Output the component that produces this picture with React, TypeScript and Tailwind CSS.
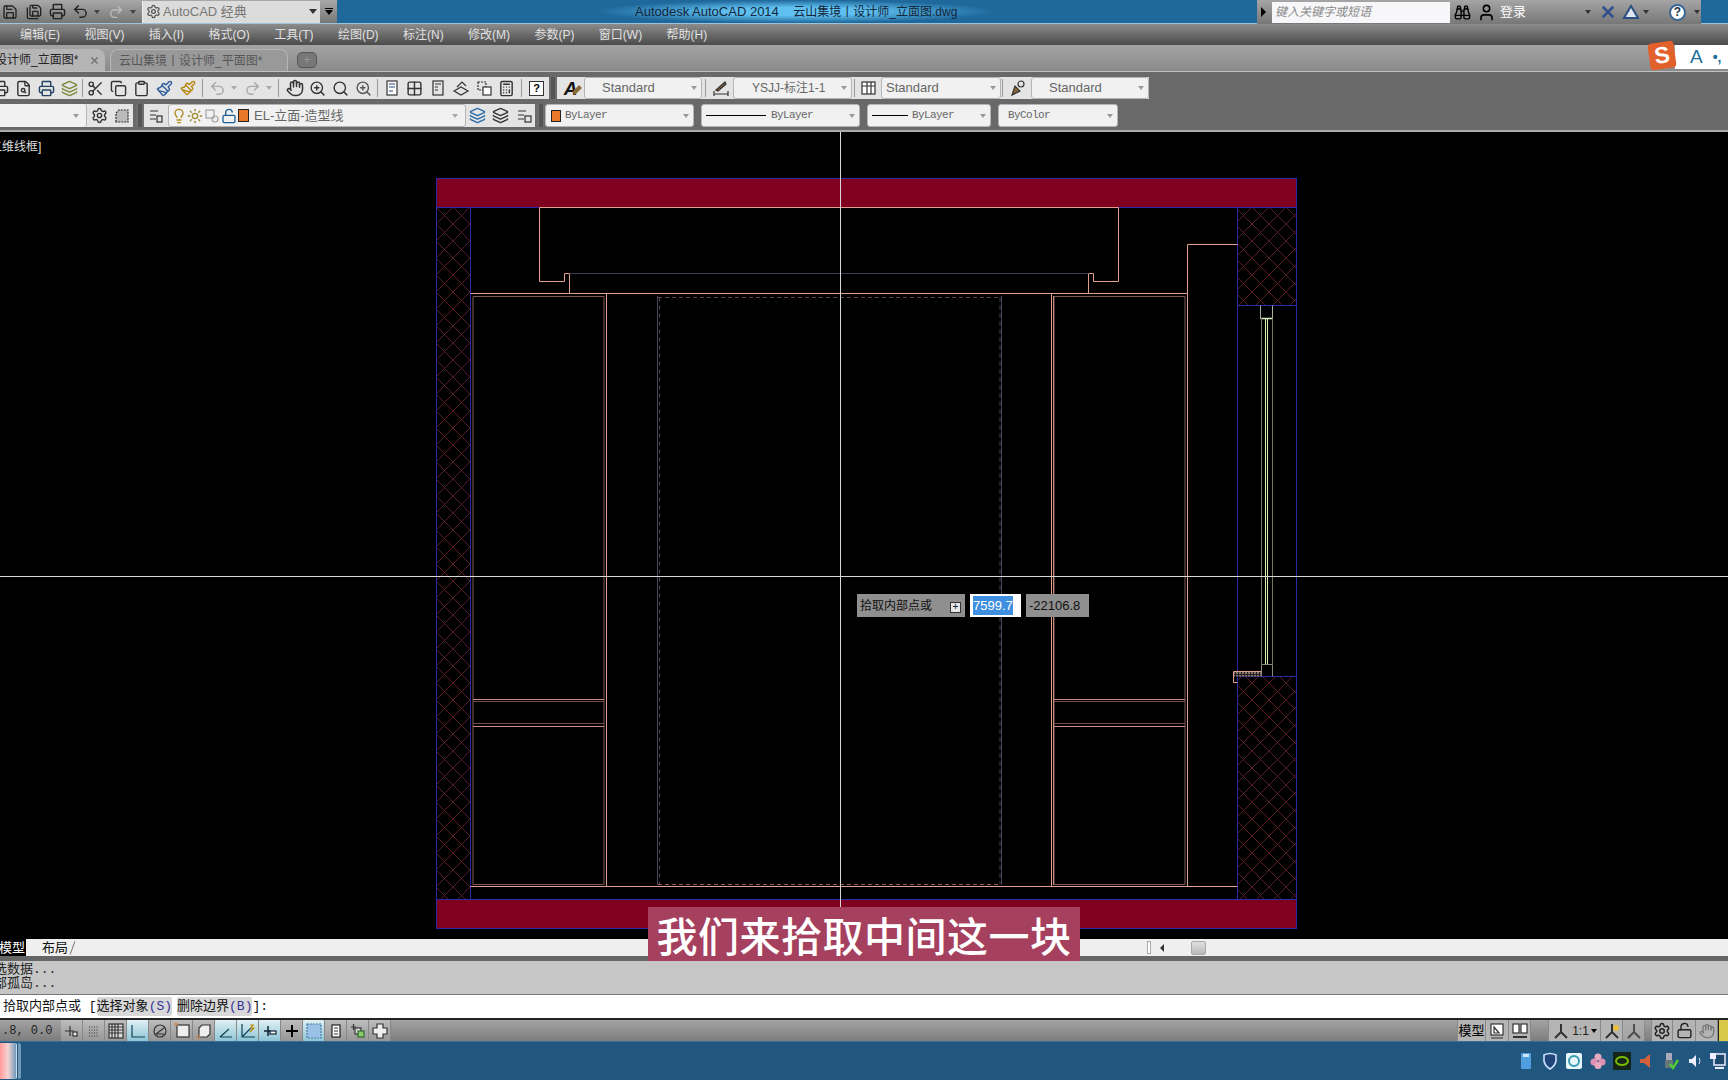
import React from 'react'
import {
  Binoculars, Calculator, Clipboard, Copy, FileSearch, Grid2x2, Hand, Layers, Lightbulb, LockOpen,
  Paintbrush, Printer, Redo2, Save, SaveAll, Scissors, Search, Settings, Sun, Undo2, User, X, ZoomIn,
} from 'lucide-react'

const cjk = "font-['Liberation_Sans','Noto_Sans_CJK_SC',sans-serif]"
const mono = "font-['Liberation_Mono','Noto_Sans_CJK_SC',monospace]"

const menus = ['编辑(E)', '视图(V)', '插入(I)', '格式(O)', '工具(T)', '绘图(D)', '标注(N)', '修改(M)', '参数(P)', '窗口(W)', '帮助(H)']

const Caret = ({ className = 'border-t-[#777]' }: { className?: string }) => (
  <span className={`inline-block w-0 h-0 border-x-[3px] border-x-transparent border-t-[4px] ${className}`} />
)

const Cell = ({ children, w = 'w-[23px]' }: { children?: React.ReactNode; w?: string }) => (
  <span className={`${w} h-full shrink-0 flex items-center justify-center text-[#333]`}>{children}</span>
)

const Sep = ({ className = 'mx-[2px]' }: { className?: string }) => <span className={`w-px h-[18px] shrink-0 bg-[#999] ${className}`} />

const Combo = ({ w, children }: { w: string; children: React.ReactNode }) => (
  <span className={`${w} h-full shrink-0 flex items-center justify-between bg-[#f1f1f1] border border-[#b5b5b5] rounded-[3px] pr-[4px] text-[#666]`}>
    {children}
    <Caret className="border-t-[#999] shrink-0" />
  </span>
)

const Wrap = ({ children, className = '' }: { children: React.ReactNode; className?: string }) => (
  <svg viewBox="0 0 18 18" width="18" height="18" fill="none" stroke="#333" strokeWidth="1.2" className={className}>
    {children}
  </svg>
)

const statusIcons: { on?: boolean; icon: React.ReactNode }[] = [
  { icon: <><path d="M2 9h9M7 4v10" /><rect x="10" y="10" width="4" height="4" fill="#eee" /></> },
  { icon: <path d="M4 5h9M4 8h9M4 11h9M4 14h9" strokeDasharray="1 1.5" /> },
  { icon: <><rect x="2" y="2" width="14" height="14" fill="#ddd" /><path d="M5 2v14M8 2v14M11 2v14M14 2M2 5h14M2 8h14M2 11h14" /></> },
  { on: true, icon: <path d="M3 3v12h13M3 15" stroke="#145" /> },
  { icon: <><circle cx="9" cy="9" r="6" /><path d="M5 12l8-6M5 12h8" /></> },
  { icon: <><rect x="4" y="3" width="12" height="12" fill="#eee" /><circle cx="3" cy="2.5" r="1.5" stroke="#c85" /></> },
  { icon: <><path d="M4 6l3-3h8v9l-3 3H4z" fill="#eee" /><circle cx="3.5" cy="15" r="1.5" stroke="#c85" /></> },
  { on: true, icon: <path d="M3 15h12M3 15l9-8" stroke="#145" /> },
  { on: true, icon: <><path d="M3 2v13h13M3 15l9-9" stroke="#145" /><path d="M11 3l3 0-2 3 3 0-4 4" stroke="#b80" /></> },
  { on: true, icon: <><path d="M3 9h7M7 4v10" stroke="#123" strokeWidth="1.5" /><rect x="9" y="9" width="6" height="3" fill="#fff" stroke="#123" /></> },
  { icon: <path d="M9 3v12M3 9h12" stroke="#000" strokeWidth="2" /> },
  { on: true, icon: <rect x="2" y="2" width="14" height="14" fill="#9cc1e6" stroke="#4a7ea8" strokeDasharray="2 1" /> },
  { icon: <><rect x="5" y="3" width="8" height="12" fill="#fff" stroke="#222" /><path d="M7 6h4M7 9h4M7 12h4" /></> },
  { icon: <><path d="M2 5h5M4.5 2v6" /><rect x="6" y="6" width="6" height="6" fill="#ddd" /><rect x="9" y="9" width="6" height="6" fill="#8c6" stroke="#363" /></> },
  { icon: <path d="M6 2h6v4h4v6h-4v4H6v-4H2V6h4z" fill="#eee" /> },
]

const Tray = ({ children, className = '' }: { children: React.ReactNode; className?: string }) => (
  <svg viewBox="0 0 18 18" width="18" height="18" className={`shrink-0 ${className}`}>{children}</svg>
)

function Drawing() {
  const pink = '#e0a08c'
  const blue = '#2a2aa8'
  const panel = (x1: number, x2: number) => (
    <g fill="none" strokeWidth="1">
      <path d={`M${x1} 296.5H${x2}V884.5H${x1}Z`} stroke="#7d5a54" />
      <path d={`M${x1} 699.5H${x2}M${x1} 726.5H${x2}`} stroke="#c98d80" />
      <path d={`M${x1} 701.5H${x2}M${x1} 723.5H${x2}`} stroke="#6d4c47" />
    </g>
  )
  return (
    <svg viewBox="0 132 1728 807" className="block w-full h-full">
      <defs>
        <pattern id="net" width="17" height="17" patternUnits="userSpaceOnUse" x="436" y="207">
          <path d="M0 0L17 17M17 0L0 17" stroke="#5f2029" strokeWidth="0.9" />
        </pattern>
        <pattern id="sill" width="3" height="3" patternUnits="userSpaceOnUse">
          <rect width="3" height="3" fill="#2a2220" />
          <circle cx="1" cy="1" r="0.9" fill="#b09a90" />
        </pattern>
      </defs>
      {/* walls */}
      <rect x="436.5" y="178.5" width="860" height="29" fill="#80001f" stroke={blue} />
      <rect x="436.5" y="899.5" width="860" height="29" fill="#80001f" stroke={blue} />
      <rect x="436.5" y="207.5" width="34" height="692" fill="url(#net)" stroke={blue} />
      <rect x="1237.5" y="207.5" width="59" height="98" fill="url(#net)" stroke={blue} />
      <rect x="1237.5" y="676.5" width="59" height="223" fill="url(#net)" stroke={blue} />
      <path d="M1237.5 305V677M1296.5 305V677" stroke={blue} fill="none" />
      {/* ceiling */}
      <g stroke={pink} fill="none" strokeWidth="1">
        <path d="M539.5 207.5V281.5H564.5V273.5H569.5V293.5" />
        <path d="M539.5 207.5H1118.5V281.5H1093.5V273.5H1088.5V293.5" />
        <path d="M470.5 293.5H1187.5V244.5H1237.5" />
        <path d="M1187.5 293.5V886.5M470.5 886.5H1237.5" />
        <path d="M606.5 293.5V886.5M1051.5 293.5V886.5" />
      </g>
      <path d="M569.5 273.5H1088.5" stroke="#3c3c55" />
      {panel(473, 604)}
      {panel(1054, 1185)}
      <path d="M1053.5 296V885" stroke="#c98d80" />
      {/* dashed centre */}
      <g stroke="#4e4460" fill="none">
        <path d="M657.5 296V885M1001.5 296V885" />
        <path d="M659.5 297.5V884" strokeDasharray="4 4" />
        <path d="M1000 297.5V884" strokeDasharray="4 4" />
      </g>
      <path d="M658 297.5H1000" stroke="#5c4540" strokeDasharray="4 3" />
      <path d="M658 884.5H1000" stroke="#8a6258" strokeDasharray="4 3" />
      {/* window */}
      <g fill="none">
        <path d="M1260.5 305.5V318.5H1272.5V305.5" stroke="#aab09a" />
        <path d="M1260.5 318.5H1272.5" stroke="#ddeec8" strokeWidth="1.5" />
        <path d="M1261.5 318V664M1272.5 318V664" stroke="#6d7a5e" />
        <path d="M1265.5 318V664M1267.5 318V664" stroke="#dcf0b8" />
        <path d="M1261.5 664.5H1272.5V676.5M1261.5 664.5V676.5" stroke="#88887a" />
      </g>
      <rect x="1233.5" y="671.5" width="27.5" height="5" fill="url(#sill)" />
      <path d="M1261 671.5H1233.5V682.5H1237.5" stroke={pink} fill="none" />
      {/* cursor */}
      <path d="M0 576.5H1728M840.5 132V939" stroke="#d8d8d8" />
    </svg>
  )
}

export default function App() {
  return (
    <div className={`relative w-[1728px] h-[1080px] overflow-hidden flex flex-col bg-black ${cjk}`}>
      {/* title bar */}
      <div className="h-[24px] shrink-0 flex bg-[#1f689c] border-b border-[#9cc3da]">
        <div className="w-[337px] shrink-0 flex items-center bg-linear-to-b from-[#a8a8a8] to-[#777] text-[#222]">
          <Save size={16} className="ml-[2px]" />
          <SaveAll size={16} className="ml-[8px]" />
          <Printer size={17} className="ml-[7px]" />
          <Undo2 size={17} className="ml-[6px]" />
          <span className="ml-[5px] flex"><Caret className="border-t-[#444]" /></span>
          <Redo2 size={16} className="ml-[8px] text-[#bbb]" />
          <span className="ml-[6px] flex"><Caret className="border-t-[#444]" /></span>
          <span className="ml-[6px] w-[178px] h-[22px] flex items-center bg-[#dcdcdc] border-l border-[#eee] pr-[3px] text-[#777]">
            <Settings size={15} className="ml-[3px] text-[#555]" />
            <span className="ml-[2px] text-[13px] flex-1 whitespace-nowrap">AutoCAD 经典</span>
            <Caret className="border-t-[#333] border-x-[4px] border-t-[5px]" />
          </span>
          <span className="flex-1 flex flex-col items-center gap-px">
            <span className="w-[8px] h-px bg-black" />
            <Caret className="border-t-black border-x-[4px] border-t-[5px]" />
          </span>
        </div>
        <div className="ml-[258px] px-[40px] h-full flex items-center bg-[radial-gradient(ellipse_at_center,#5fc0f0_25%,#1f689c_70%)] text-[#13263a] text-[13px] whitespace-pre">
          Autodesk AutoCAD 2014{'    '}<span className="text-[12px]">云山集境丨设计师_立面图.dwg</span>
        </div>
        <div className="ml-auto mr-[27px] w-[444px] h-[24px] flex items-center bg-linear-to-b from-[#a5a5a5] to-[#777] text-[#222]">
          <span className="ml-[4px] w-0 h-0 border-y-[5px] border-y-transparent border-l-[5px] border-l-black" />
          <span className="ml-[6px] w-[178px] h-[21px] bg-[#f7f7fa] text-[#888] italic text-[12px] leading-[21px] pl-[3px]">键入关键字或短语</span>
          <Binoculars size={17} className="ml-[4px] text-black" />
          <User size={19} className="ml-[6px] text-black" />
          <span className="ml-[4px] w-[85px] text-[13px] text-white">登录</span>
          <Caret className="border-t-[#333]" />
          <X size={18} strokeWidth={3.5} className="ml-[8px] text-[#35508f]" />
          <span className="ml-[5px] flex">
            <Wrap><path d="M9 3L16 15H2Z" fill="#dfe6f2" stroke="#2c4f80" strokeWidth="2" /></Wrap>
          </span>
          <span className="ml-[3px] flex"><Caret className="border-t-[#333]" /></span>
          <span className="ml-[20px] w-[17px] h-[17px] rounded-full bg-white border-2 border-[#39679a] text-[#234] text-[12px] leading-[13px] text-center font-bold">?</span>
          <span className="ml-[8px] flex"><Caret className="border-t-[#333]" /></span>
        </div>
      </div>

      {/* menu bar */}
      <div className="h-[21px] shrink-0 flex items-center gap-[24.4px] pl-[20px] bg-linear-to-b from-[#8c8c8c] to-[#4c4c4c] text-[#e0e0e0] text-[12px] whitespace-nowrap">
        {menus.map((m) => <span key={m}>{m}</span>)}
      </div>

      {/* document tabs */}
      <div className="relative h-[27px] shrink-0 flex items-end bg-linear-to-b from-[#a5a4a5] to-[#8b8a8b] border-b border-[#c0c0c0]">
        <span className="w-[105px] h-[22px] shrink-0 flex items-center bg-[#b6b5b6] rounded-tr-[8px] text-[#222] text-[12px] whitespace-nowrap overflow-hidden">
          <span className="-ml-[5px]">设计师_立面图*</span>
          <X size={11} strokeWidth={3} className="ml-[11px] text-[#777]" />
        </span>
        <span className="ml-[5px] w-[178px] h-[22px] shrink-0 flex items-center pl-[8px] bg-[#9a999a] border border-b-0 border-[#b5b5b5] rounded-t-[8px] text-[#555] text-[12px] whitespace-nowrap">
          云山集境丨设计师_平面图*
        </span>
        <span className="ml-[9px] mb-[3px] w-[20px] h-[16px] flex items-center justify-center bg-[#777] border border-[#555] rounded-[5px] text-[#999] text-[12px] leading-none">+</span>
        {/* input method bar */}
        <span className="absolute right-0 top-[0px] w-[53px] h-[24px] flex items-center bg-white text-[#1d6f9c] text-[19px] pl-[15px] gap-[10px] whitespace-nowrap">
          A<span className="text-[14px] font-bold">•,</span>
        </span>
        <span className="absolute left-[1649px] top-[-3px] w-[26px] h-[27px] flex items-center justify-center bg-[#e2602b] rounded-[4px] -rotate-[8deg] text-white text-[23px] font-bold leading-none">S</span>
      </div>

      {/* toolbars */}
      <div className="h-[60px] shrink-0 flex flex-col gap-[5px] pt-[5px] bg-[#6a696a] border-b-2 border-[#aaa]">
        <div className="h-[22px] flex items-stretch">
          <div className="w-[549px] shrink-0 flex items-center overflow-hidden bg-[#e4e4e4]">
            <span className="-ml-[11px] flex items-center h-full">
              <Cell><Printer size={17} /></Cell>
              <Cell><FileSearch size={17} /></Cell>
              <Cell><Printer size={17} className="text-[#246]" /></Cell>
              <Cell><Layers size={17} className="text-[#7a8a3a]" /></Cell>
              <Sep className="mx-[1px]" />
              <Cell><Scissors size={17} /></Cell>
              <Cell><Copy size={17} /></Cell>
              <Cell><Clipboard size={17} /></Cell>
              <Cell><Paintbrush size={17} className="text-[#2f5d9a]" /></Cell>
              <Cell><Paintbrush size={16} className="text-[#b8860b]" /></Cell>
              <Sep className="mx-[3px]" />
              <Cell><Undo2 size={17} className="text-[#aaa]" /></Cell>
              <Cell w="w-[10px]"><Caret className="border-t-[#aaa]" /></Cell>
              <Cell w="w-[23px] ml-[2px]"><Redo2 size={17} className="text-[#aaa]" /></Cell>
              <Cell w="w-[10px]"><Caret className="border-t-[#aaa]" /></Cell>
              <Sep className="mx-[4px]" />
              <Cell><Hand size={18} /></Cell>
              <Cell><ZoomIn size={17} /></Cell>
              <Cell><Search size={17} /></Cell>
              <Cell><ZoomIn size={17} className="text-[#555]" /></Cell>
              <Sep className="mx-[2px]" />
              <Cell><Wrap><rect x="4" y="2" width="10" height="14" fill="#fff" /><path d="M6 5h6M6 8h6M6 12h4" stroke="#247" /></Wrap></Cell>
              <Cell><Grid2x2 size={17} /></Cell>
              <Cell><Wrap><rect x="4" y="2" width="10" height="14" /><path d="M6 5h6M6 8h3M6 11h3" /></Wrap></Cell>
              <Cell><Wrap><path d="M2 12l7-4 7 4-7 4zM5 8l5-5 4 4" /></Wrap></Cell>
              <Cell><Wrap><rect x="3" y="3" width="8" height="8" strokeDasharray="2 1" /><rect x="8" y="8" width="8" height="8" fill="#fff" /></Wrap></Cell>
              <Cell><Calculator size={17} /></Cell>
              <Sep className="mx-[3px]" />
              <Cell><span className="w-[15px] h-[15px] bg-white border border-[#333] text-[11px] leading-[13px] text-center font-bold text-black">?</span></Cell>
            </span>
          </div>
          <span className="w-[8px] shrink-0 bg-[#555] border-x-2 border-[#6f6f6f]" />
          <div className="flex items-center h-full bg-[#e4e4e4] text-[13px] whitespace-nowrap">
            <Cell w="w-[27px]">
              <span className="relative text-[19px] font-bold italic leading-none text-[#111]">
                A<span className="absolute left-[8px] top-[9px] w-[10px] h-[4px] bg-[#8a6a3a] -rotate-45" />
              </span>
            </Cell>
            <Combo w="w-[118px]"><span className="flex-1 pl-[17px]">Standard</span></Combo>
            <Sep className="mx-[3px]" />
            <Cell w="w-[24px]"><Wrap><path d="M2 15h14M2 12v5M16 12v5" /><path d="M4 11l9-8 1 2-8 7z" fill="#863" /></Wrap></Cell>
            <Combo w="w-[119px]"><span className="flex-1 pl-[18px] text-[12px]">YSJJ-标注1-1</span></Combo>
            <Sep className="mx-[2px]" />
            <Cell w="w-[24px]"><Wrap><rect x="2" y="3" width="13" height="12" fill="#fff" /><path d="M2 7h13M7 3v12M11 3v12" /></Wrap></Cell>
            <Combo w="w-[120px]"><span className="flex-1 pl-[4px]">Standard</span></Combo>
            <Sep className="mx-[1px]" />
            <Cell w="w-[27px]"><Wrap><circle cx="12" cy="5" r="3" /><path d="M3 16l3-9 5 5z" fill="#863" /></Wrap></Cell>
            <Combo w="w-[118px]"><span className="flex-1 pl-[17px]">Standard</span></Combo>
          </div>
        </div>
        <div className="h-[23px] flex items-stretch">
          <div className="w-[133px] shrink-0 flex items-center bg-[#e4e4e4]">
            <span className="w-[87px] h-full bg-[#f1f1f1] border-r border-[#b5b5b5] rounded-r-[3px] flex items-center justify-end pr-[7px]"><Caret className="border-t-[#999]" /></span>
            <Cell w="w-[24px]"><Settings size={17} /></Cell>
            <Cell w="w-[22px]"><Wrap><path d="M3 15V6l3-3h9v12z" fill="#bbb" strokeDasharray="2 1" /></Wrap></Cell>
          </div>
          <span className="ml-[3px] w-[8px] shrink-0 bg-[#555] border-x-2 border-[#6f6f6f]" />
          <div className="flex items-center h-full bg-[#e4e4e4] text-[#666] whitespace-nowrap">
            <Cell w="w-[24px]"><Wrap><path d="M3 4h8M3 8h6M3 12h6" /><rect x="10" y="9" width="5" height="6" /></Wrap></Cell>
            <span className="w-[298px] h-full shrink-0 flex items-center bg-[#f1f1f1] border border-[#b5b5b5] rounded-[3px] pl-[1px] pr-[7px]">
              <Lightbulb size={16} className="ml-[1px] text-[#b08a1a]" />
              <Sun size={16} className="text-[#a08a30]" />
              <Wrap className="opacity-40"><rect x="3" y="3" width="8" height="8" /><circle cx="12" cy="12" r="3" /></Wrap>
              <LockOpen size={16} className="text-[#1c5f96]" />
              <span className="ml-[1px] w-[11px] h-[13px] bg-[#e8772a] border border-[#222]" />
              <span className="ml-[5px] flex-1 text-[13px]">EL-立面-造型线</span>
              <Caret className="border-t-[#aaa]" />
            </span>
            <Cell w="w-[23px]"><Layers size={17} className="text-[#2b6ca8]" /></Cell>
            <Cell w="w-[23px]"><Layers size={17} /></Cell>
            <Cell w="w-[23px]"><Wrap><path d="M3 4h8M3 8h6M3 12h6" /><rect x="10" y="9" width="6" height="6" /></Wrap></Cell>
          </div>
          <span className="ml-[2px] w-[8px] shrink-0 bg-[#555] border-x-2 border-[#6f6f6f]" />
          <div className={`flex items-center h-full gap-[7px] text-[#555] text-[11px] tracking-[-0.6px] whitespace-nowrap ${mono}`}>
            <Combo w="w-[149px]">
              <span className="flex-1 flex items-center pl-[5px] gap-[4px]"><span className="w-[10px] h-[12px] bg-[#e8772a] border border-[#222]" />ByLayer</span>
            </Combo>
            <Combo w="w-[159px]">
              <span className="flex-1 flex items-center pl-[4px] gap-[5px]"><span className="w-[60px] h-px bg-black" />ByLayer</span>
            </Combo>
            <Combo w="w-[124px]">
              <span className="flex-1 flex items-center pl-[4px] gap-[4px]"><span className="w-[36px] h-px bg-black" />ByLayer</span>
            </Combo>
            <Combo w="w-[120px]"><span className="flex-1 pl-[9px]">ByColor</span></Combo>
          </div>
        </div>
      </div>

      {/* drawing area */}
      <div className="relative h-[807px] shrink-0 bg-black">
        <Drawing />
        <span className="absolute left-[-10px] top-[6px] text-[#ddd] text-[12px] whitespace-nowrap">二维线框]</span>
        <div className="absolute left-[857px] top-[462px] h-[23px] flex items-stretch text-[12px] whitespace-nowrap">
          <span className="w-[108px] flex items-center justify-between px-[3px] bg-[#8f8f8f] text-[#111]">
            拾取内部点或
            <span className="mr-[1px] mt-[4px] w-[11px] h-[11px] bg-[#e6e6e6] border border-[#333] text-[10px] leading-[8px] text-center text-[#123]">+</span>
          </span>
          <span className="ml-[5px] w-[51px] flex items-center pl-[3px] bg-white">
            <span className="bg-[#3f8fe0] text-white text-[13px] leading-[19px]">7599.7</span>
          </span>
          <span className="ml-[5px] w-[63px] flex items-center pl-[3px] bg-[#8f8f8f] text-[#111] text-[13px]">-22106.8</span>
        </div>
      </div>

      {/* model / layout tabs */}
      <div className="h-[17px] shrink-0 flex items-center bg-[#efefef] text-[13px] leading-none">
        <span className="w-[26px] h-full shrink-0 bg-black text-white overflow-hidden flex items-center justify-end pr-px whitespace-nowrap">模型</span>
        <span className="ml-[16px] text-[#111] whitespace-nowrap">布局</span>
        <span className="ml-[4px] w-px h-[14px] bg-[#777] rotate-[20deg]" />
        <span className="ml-[1074px] w-[4px] h-[13px] border border-[#aaa] bg-white" />
        <span className="ml-[9px] w-0 h-0 border-y-[4px] border-y-transparent border-r-[4px] border-r-[#333]" />
        <span className="ml-[27px] w-[15px] h-[14px] bg-linear-to-b from-[#e0e0e0] to-[#b8b8b8] border border-[#aaa] rounded-[2px]" />
      </div>

      {/* command window */}
      <div className={`h-[39px] shrink-0 bg-[#c6c6c6] border-t-[5px] border-[#666] border-b border-b-[#777] text-[13px] leading-[14px] text-[#222] overflow-hidden pt-[2px] ${mono}`}>
        <div className="-ml-[6px] whitespace-nowrap">选数据...</div>
        <div className="-ml-[6px] whitespace-nowrap">部孤岛...</div>
      </div>
      <div className={`h-[23px] shrink-0 flex items-center pl-[3px] bg-white text-[13px] text-[#111] whitespace-pre ${mono}`}>
        拾取内部点或 [<span className="bg-[#d8d8d8] rounded-[2px]">选择对象<span className="text-[#33339a]">(S)</span></span><span className="ml-[5px] bg-[#d8d8d8] rounded-[2px]">删除边界<span className="text-[#33339a]">(B)</span></span>]:
      </div>

      {/* status bar */}
      <div className="h-[23px] shrink-0 flex items-stretch bg-linear-to-b from-[#a3a3a3] to-[#7d7d7d] border-t-2 border-[#222] text-[#222]">
        <span className={`w-[61px] shrink-0 flex items-center pl-[2px] text-[12px] whitespace-pre ${mono}`}>.8, 0.0</span>
        {statusIcons.map((s, i) => (
          <span key={i} className={`w-[22px] shrink-0 flex items-center justify-center border-r border-[#888] ${s.on ? 'bg-linear-to-b from-[#dff0f4] to-[#8cc5d6]' : 'bg-linear-to-b from-[#bdbdbd] to-[#979797]'}`}>
            <Wrap>{s.icon}</Wrap>
          </span>
        ))}
        <span className="ml-auto w-[29px] shrink-0 flex items-center justify-center bg-[#b4b4b4] border-x border-[#888] text-[13px] text-black whitespace-nowrap">模型</span>
        <span className="w-[23px] shrink-0 flex items-center justify-center bg-[#b4b4b4] border-r border-[#888]"><Wrap><rect x="3" y="2" width="12" height="11" fill="#fff" /><path d="M6 11V5l5 6zM3 16h12" /></Wrap></span>
        <span className="w-[22px] shrink-0 flex items-center justify-center bg-[#b4b4b4] border-r border-[#888]"><Wrap><rect x="2" y="2" width="6" height="9" fill="#fff" /><rect x="10" y="2" width="6" height="9" fill="#fff" /><path d="M2 15h14" strokeWidth="2" /></Wrap></span>
        <span className="w-[17px] shrink-0" />
        <span className="w-[53px] shrink-0 flex items-center justify-center gap-[2px] bg-[#b4b4b4] border-x border-[#888] text-[12px]">
          <Wrap><path d="M9 2v8M9 10l-6 6M9 10l6 6" strokeWidth="2" /></Wrap>1:1
          <Caret className="border-t-black" />
        </span>
        <span className="w-[22px] shrink-0 flex items-center justify-center bg-[#b4b4b4] border-r border-[#888]"><Wrap><path d="M9 2v8M9 10l-6 6M9 10l6 6" strokeWidth="2" /><circle cx="13" cy="6" r="3" fill="#e8c040" stroke="none" /></Wrap></span>
        <span className="w-[22px] shrink-0 flex items-center justify-center bg-[#b4b4b4] border-r border-[#888] opacity-70"><Wrap><path d="M9 2v8M9 10l-6 6M9 10l6 6" strokeWidth="2" /></Wrap></span>
        <span className="w-[6px] shrink-0" />
        <span className="w-[22px] shrink-0 flex items-center justify-center bg-[#b4b4b4] border-x border-[#888]"><Settings size={18} /></span>
        <span className="w-[23px] shrink-0 flex items-center justify-center bg-[#b4b4b4] border-r border-[#888]"><LockOpen size={17} /></span>
        <span className="w-[22px] shrink-0 flex items-center justify-center bg-[#b4b4b4] border-r border-[#888]"><Hand size={16} className="text-[#777]" /></span>
        <span className="w-[10px] shrink-0 bg-[#d8c94a] border-l border-[#222]" />
      </div>

      {/* taskbar */}
      <div className="h-[39px] shrink-0 flex items-center bg-[#21577e] border-t border-[#3a6f96]">
        <span className="w-[17px] h-[36px] shrink-0 bg-linear-to-r from-[#ff9a9a] via-[#f4d4d4] to-[#6f9ab8] border-r border-[#cfe0ea] rounded-r-[2px]" />
        <span className="ml-px w-[3px] h-[36px] shrink-0 bg-[#6f9ab8] rounded-r-[2px]" />
        <div className="ml-auto flex items-center gap-[6px] pr-[1px]">
          <Tray><rect x="4" y="1" width="10" height="16" rx="1" fill="#4f9fe0" /><rect x="6" y="2" width="6" height="3" fill="#cfe6f7" /></Tray>
          <Tray><path d="M3 3q6 -3 12 0v6q-1 5 -6 8q-5 -3 -6 -8z" fill="#20457a" stroke="#cfe0ff" strokeWidth="1.6" /></Tray>
          <Tray><rect x="1" y="1" width="16" height="16" rx="2" fill="#e8f6fa" /><circle cx="9" cy="9" r="5" fill="none" stroke="#3a9ab0" strokeWidth="2" /></Tray>
          <Tray><circle cx="9" cy="5" r="3.5" fill="#e8a8c0" /><circle cx="5" cy="10" r="3.5" fill="#e090b0" /><circle cx="13" cy="10" r="3.5" fill="#e090b0" /><circle cx="9" cy="13.5" r="3.5" fill="#e8a8c0" /></Tray>
          <Tray><rect x="0" y="0" width="18" height="18" fill="#15251a" /><ellipse cx="9" cy="9" rx="6" ry="4" fill="none" stroke="#76b900" strokeWidth="2" /></Tray>
          <Tray><path d="M3 7h4l6-5v14l-6-5H3z" fill="#d2603a" /></Tray>
          <Tray><rect x="5" y="1" width="6" height="8" fill="#aab" /><rect x="4" y="8" width="8" height="8" fill="#677" /><path d="M9 12l3 4 5-8" stroke="#5c3" strokeWidth="2.4" fill="none" /></Tray>
          <Tray><path d="M4 7h3l4-4v12l-4-4H4z" fill="#eef" /><path d="M14 6q2 3 0 6" stroke="#dde" fill="none" /></Tray>
          <Tray><rect x="5" y="2" width="11" height="11" fill="#1d4a6c" stroke="#eef" strokeWidth="1.5" /><rect x="1" y="1" width="6" height="6" fill="#eef" /><path d="M6 16h9" stroke="#eef" strokeWidth="2" /></Tray>
        </div>
      </div>

      {/* subtitle */}
      <div className="absolute left-[648px] top-[907px] h-[54px] w-[432px] flex items-center justify-center bg-[#a5415f] text-white text-[41px] font-medium leading-none tracking-[0.5px] whitespace-nowrap font-['Noto_Sans_CJK_SC',sans-serif]">
        我们来拾取中间这一块
      </div>
    </div>
  )
}
